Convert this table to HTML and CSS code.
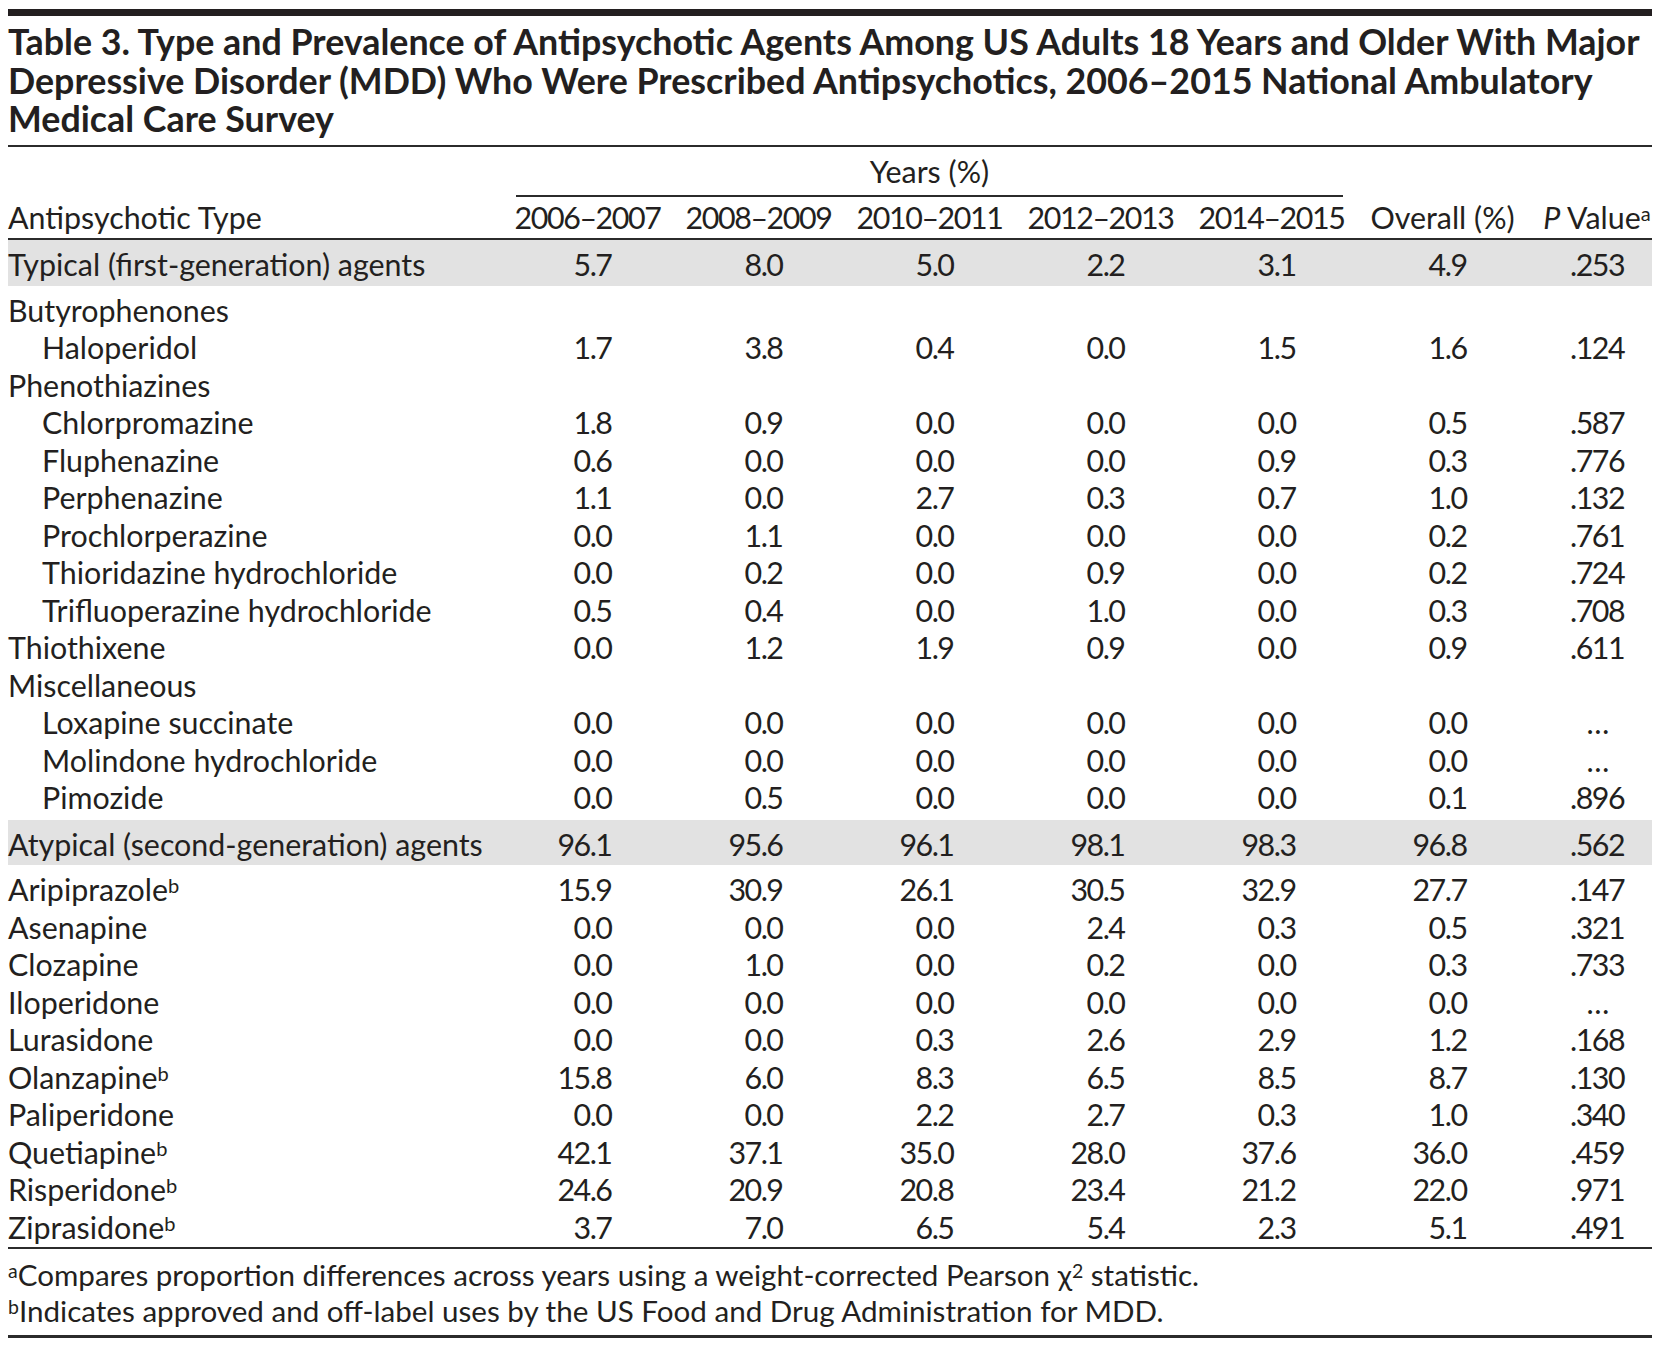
FILE: index.html
```html
<!DOCTYPE html>
<html lang="en">
<head>
<meta charset="utf-8">
<title>Table 3</title>
<link rel="stylesheet" href="styles.css">
</head>
<body>
<div class="page">
  <div class="top-rule"></div>
  <h1 class="title">Table 3. Type and Prevalence of Antipsychotic Agents Among US Adults 18 Years and Older With Major Depressive Disorder (MDD) Who Were Prescribed Antipsychotics, 2006–2015 National Ambulatory Medical Care Survey</h1>
  <table class="data">
    <colgroup>
      <col class="c-name"><col class="c-yr"><col class="c-yr"><col class="c-yr"><col class="c-yr"><col class="c-yr"><col class="c-ov"><col class="c-p">
    </colgroup>
    <thead>
      <tr class="h-top">
        <th></th>
        <th colspan="5" class="years"><div class="years-label">Years (%)</div></th>
        <th></th>
        <th></th>
      </tr>
      <tr class="h-bot">
        <th class="name">Antipsychotic Type</th>
        <th class="yr">2006–2007</th>
        <th class="yr">2008–2009</th>
        <th class="yr">2010–2011</th>
        <th class="yr">2012–2013</th>
        <th class="yr">2014–2015</th>
        <th>Overall (%)</th>
        <th class="pv"><i>P</i> Value<sup>a</sup></th>
      </tr>
    </thead>
    <tbody>
      <tr class="group"><td class="name">Typical (first-generation) agents</td><td class="num">5.7</td><td class="num">8.0</td><td class="num">5.0</td><td class="num">2.2</td><td class="num">3.1</td><td class="num">4.9</td><td class="pv">.253</td></tr>
      <tr><td class="name">Butyrophenones</td><td></td><td></td><td></td><td></td><td></td><td></td><td></td></tr>
      <tr><td class="name sub">Haloperidol</td><td class="num">1.7</td><td class="num">3.8</td><td class="num">0.4</td><td class="num">0.0</td><td class="num">1.5</td><td class="num">1.6</td><td class="pv">.124</td></tr>
      <tr><td class="name">Phenothiazines</td><td></td><td></td><td></td><td></td><td></td><td></td><td></td></tr>
      <tr><td class="name sub">Chlorpromazine</td><td class="num">1.8</td><td class="num">0.9</td><td class="num">0.0</td><td class="num">0.0</td><td class="num">0.0</td><td class="num">0.5</td><td class="pv">.587</td></tr>
      <tr><td class="name sub">Fluphenazine</td><td class="num">0.6</td><td class="num">0.0</td><td class="num">0.0</td><td class="num">0.0</td><td class="num">0.9</td><td class="num">0.3</td><td class="pv">.776</td></tr>
      <tr><td class="name sub">Perphenazine</td><td class="num">1.1</td><td class="num">0.0</td><td class="num">2.7</td><td class="num">0.3</td><td class="num">0.7</td><td class="num">1.0</td><td class="pv">.132</td></tr>
      <tr><td class="name sub">Prochlorperazine</td><td class="num">0.0</td><td class="num">1.1</td><td class="num">0.0</td><td class="num">0.0</td><td class="num">0.0</td><td class="num">0.2</td><td class="pv">.761</td></tr>
      <tr><td class="name sub">Thioridazine hydrochloride</td><td class="num">0.0</td><td class="num">0.2</td><td class="num">0.0</td><td class="num">0.9</td><td class="num">0.0</td><td class="num">0.2</td><td class="pv">.724</td></tr>
      <tr><td class="name sub">Trifluoperazine hydrochloride</td><td class="num">0.5</td><td class="num">0.4</td><td class="num">0.0</td><td class="num">1.0</td><td class="num">0.0</td><td class="num">0.3</td><td class="pv">.708</td></tr>
      <tr><td class="name">Thiothixene</td><td class="num">0.0</td><td class="num">1.2</td><td class="num">1.9</td><td class="num">0.9</td><td class="num">0.0</td><td class="num">0.9</td><td class="pv">.611</td></tr>
      <tr><td class="name">Miscellaneous</td><td></td><td></td><td></td><td></td><td></td><td></td><td></td></tr>
      <tr><td class="name sub">Loxapine succinate</td><td class="num">0.0</td><td class="num">0.0</td><td class="num">0.0</td><td class="num">0.0</td><td class="num">0.0</td><td class="num">0.0</td><td class="pv">…</td></tr>
      <tr><td class="name sub">Molindone hydrochloride</td><td class="num">0.0</td><td class="num">0.0</td><td class="num">0.0</td><td class="num">0.0</td><td class="num">0.0</td><td class="num">0.0</td><td class="pv">…</td></tr>
      <tr><td class="name sub">Pimozide</td><td class="num">0.0</td><td class="num">0.5</td><td class="num">0.0</td><td class="num">0.0</td><td class="num">0.0</td><td class="num">0.1</td><td class="pv">.896</td></tr>
      <tr class="group spaced"><td class="name">Atypical (second-generation) agents</td><td class="num">96.1</td><td class="num">95.6</td><td class="num">96.1</td><td class="num">98.1</td><td class="num">98.3</td><td class="num">96.8</td><td class="pv">.562</td></tr>
      <tr><td class="name">Aripiprazole<sup>b</sup></td><td class="num">15.9</td><td class="num">30.9</td><td class="num">26.1</td><td class="num">30.5</td><td class="num">32.9</td><td class="num">27.7</td><td class="pv">.147</td></tr>
      <tr><td class="name">Asenapine</td><td class="num">0.0</td><td class="num">0.0</td><td class="num">0.0</td><td class="num">2.4</td><td class="num">0.3</td><td class="num">0.5</td><td class="pv">.321</td></tr>
      <tr><td class="name">Clozapine</td><td class="num">0.0</td><td class="num">1.0</td><td class="num">0.0</td><td class="num">0.2</td><td class="num">0.0</td><td class="num">0.3</td><td class="pv">.733</td></tr>
      <tr><td class="name">Iloperidone</td><td class="num">0.0</td><td class="num">0.0</td><td class="num">0.0</td><td class="num">0.0</td><td class="num">0.0</td><td class="num">0.0</td><td class="pv">…</td></tr>
      <tr><td class="name">Lurasidone</td><td class="num">0.0</td><td class="num">0.0</td><td class="num">0.3</td><td class="num">2.6</td><td class="num">2.9</td><td class="num">1.2</td><td class="pv">.168</td></tr>
      <tr><td class="name">Olanzapine<sup>b</sup></td><td class="num">15.8</td><td class="num">6.0</td><td class="num">8.3</td><td class="num">6.5</td><td class="num">8.5</td><td class="num">8.7</td><td class="pv">.130</td></tr>
      <tr><td class="name">Paliperidone</td><td class="num">0.0</td><td class="num">0.0</td><td class="num">2.2</td><td class="num">2.7</td><td class="num">0.3</td><td class="num">1.0</td><td class="pv">.340</td></tr>
      <tr><td class="name">Quetiapine<sup>b</sup></td><td class="num">42.1</td><td class="num">37.1</td><td class="num">35.0</td><td class="num">28.0</td><td class="num">37.6</td><td class="num">36.0</td><td class="pv">.459</td></tr>
      <tr><td class="name">Risperidone<sup>b</sup></td><td class="num">24.6</td><td class="num">20.9</td><td class="num">20.8</td><td class="num">23.4</td><td class="num">21.2</td><td class="num">22.0</td><td class="pv">.971</td></tr>
      <tr class="last"><td class="name">Ziprasidone<sup>b</sup></td><td class="num">3.7</td><td class="num">7.0</td><td class="num">6.5</td><td class="num">5.4</td><td class="num">2.3</td><td class="num">5.1</td><td class="pv">.491</td></tr>
    </tbody>
  </table>
  <div class="notes">
    <p><sup>a</sup>Compares proportion differences across years using a weight-corrected Pearson χ<sup>2</sup> statistic.</p>
    <p><sup>b</sup>Indicates approved and off-label uses by the US Food and Drug Administration for MDD.</p>
  </div>
</div>
</body>
</html>
```
FILE: styles.css
```css
html, body {
  margin: 0;
  padding: 0;
  background: #ffffff;
}

body {
  color: #231f20;
  font-family: Lato, "Open Sans", "Liberation Sans", sans-serif;
}

.page {
  width: 1644px;
  margin-left: 8px;
  padding-top: 9px;
}

.top-rule {
  height: 7px;
  background: #231f20;
}

.title {
  margin: 0;
  width: 1644px;
  padding: 7.1px 0 6.4px;
  font-family: Lato, "Open Sans", sans-serif;
  font-weight: 700;
  font-size: 35.8px;
  line-height: 38.5px;
  border-bottom: 2px solid #2b2b2b;
}

.data {
  width: 1644px;
  table-layout: fixed;
  border-collapse: separate;
  border-spacing: 0;
  font-variant-numeric: tabular-nums;
}

.c-name { width: 494px; }
.c-yr { width: 171px; }
.c-ov { width: 171px; }
.c-p { width: 124px; }

.data th,
.data td {
  padding: 10.6px 0 0;
  font-size: 30.4px;
  line-height: 26.9px;
  font-weight: 400;
  white-space: nowrap;
  vertical-align: top;
}

.data .h-top th {
  padding: 0;
}

.data .h-top th.years {
  padding: 9.9px 14px 0;
  text-align: center;
  line-height: 29.1px;
}

.years-label {
  padding-bottom: 9px;
  border-bottom: 2px solid #2b2b2b;
}

.data .h-bot th {
  padding: 3.2px 0 3px;
  line-height: 35.3px;
  text-align: center;
  border-bottom: 2px solid #2b2b2b;
}

.data .h-bot th.name {
  text-align: left;
}

.data .h-bot th.yr {
  letter-spacing: -1.4px;
}

.data .h-bot th.pv {
  padding-left: 14px;
}

.data td.pv {
  text-align: center;
  padding-left: 14px;
  letter-spacing: -1.5px;
}

.data td.name {
  text-align: left;
}

.data td.sub {
  padding-left: 34px;
}

.data td.num {
  text-align: right;
  padding-right: 61.5px;
  letter-spacing: -1.5px;
}

.data .group td {
  background: #e2e2e2;
  padding-bottom: 8px;
}

.data .group.spaced td {
  border-top: 9px solid #ffffff;
}

.data .last td {
  padding-bottom: 6.5px;
}

sup {
  font-size: 0.66em;
  line-height: 0;
  vertical-align: 0.42em;
  letter-spacing: 0;
}

.notes {
  border-top: 2px solid #2b2b2b;
  border-bottom: 3px solid #2b2b2b;
  padding: 8.4px 0 5.6px;
  font-size: 29.6px;
  line-height: 36px;
}

.notes p {
  margin: 0;
  white-space: nowrap;
}
```
